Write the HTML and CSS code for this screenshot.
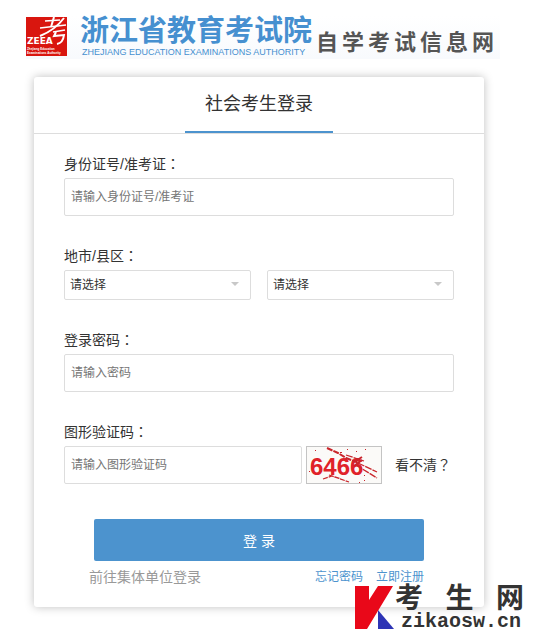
FILE: index.html
```html
<!DOCTYPE html>
<html lang="zh-CN">
<head>
    <meta charset="UTF-8">
    <meta name="viewport" content="width=device-width, initial-scale=1.0">
    <title>社会考生登录</title>
    <link rel="stylesheet" href="styles.css">
</head>
<body>
    <div class="page">
        <header class="header">
            <svg class="logo" viewBox="0 0 41 40" aria-hidden="true">
                <rect width="41" height="39" fill="#d9160f"/>
                <g fill="none" stroke="#fff">
                    <path d="M19 4 L34 3" stroke-width="1.6"/>
                    <path d="M28 0 L25 10" stroke-width="2"/>
                    <path d="M14 11 L40 8" stroke-width="1.6"/>
                    <path d="M38 1 Q29 13 14 19" stroke-width="2"/>
                    <path d="M27 15 L39 13" stroke-width="1.6"/>
                    <path d="M30 15 L28 19 L38 18 Q37 26 31 27" stroke-width="2"/>
                </g>
                <text class="logo-name" x="1" y="27">ZEEA</text>
                <text class="logo-sub" x="1" y="33">Zhejiang Education</text>
                <text class="logo-sub" x="1" y="37">Examinations Authority</text>
            </svg>
            <div class="org">
                <h1 class="org-name">浙江省教育考试院</h1>
                <p class="org-en">ZHEJIANG EDUCATION EXAMINATIONS AUTHORITY</p>
            </div>
            <p class="site-name"><span>自</span><span>学</span><span>考</span><span>试</span><span>信</span><span>息</span><span>网</span></p>
        </header>

        <main class="card">
            <div class="card-head">
                <h2 class="tab">社会考生登录</h2>
            </div>
            <form class="form">
                <div class="field">
                    <label for="idcard">身份证号/准考证<span class="punct" lang="zh-TW">：</span></label>
                    <input class="text" type="text" id="idcard" placeholder="请输入身份证号/准考证">
                </div>
                <div class="field">
                    <label for="city">地市/县区<span class="punct" lang="zh-TW">：</span></label>
                    <div class="selects">
                        <div class="select-box">
                            <select id="city"><option>请选择</option></select>
                        </div>
                        <div class="select-box">
                            <select id="county" aria-label="县区"><option>请选择</option></select>
                        </div>
                    </div>
                </div>
                <div class="field">
                    <label for="password">登录密码<span class="punct" lang="zh-TW">：</span></label>
                    <input class="text" type="password" id="password" placeholder="请输入密码">
                </div>
                <div class="field">
                    <label for="code">图形验证码<span class="punct" lang="zh-TW">：</span></label>
                    <div class="code-row">
                        <input class="text" type="text" id="code" placeholder="请输入图形验证码">
                        <svg class="captcha" viewBox="0 0 76 38">
                            <rect x="0.5" y="0.5" width="75" height="37" fill="#fbfaf8" stroke="#c4c4c4"/>
                            <text class="captcha-text" x="4" y="29">6466</text>
                            <g fill="none" stroke="#c9252b">
                                <path d="M21 2 L32 7 L40 12 L53 17" stroke-width="2" stroke-dasharray="6 1"/>
                                <path d="M40 9 L58 15 M52 17 L71 26 M50 19 L71 32" stroke-width="1.3" stroke-dasharray="7 1"/>
                                <path d="M17 33 L26 30 L43 36 M23 29 L35 33" stroke-width="1.3" stroke-dasharray="5 1"/>
                                <path d="M48 16 L56 11 M48 20 L56 14" stroke-width="2"/>
                            </g>
                            <path fill="#c9252b" d="M9 4h1v1h-1z M34 6h2v1h-2z M41 3h1v1h-1z M50 5h1v1h-1z M59 3h1v1h-1z M3 25h1v1h-1z M53 36h1v1h-1z M58 29h1v1h-1z M58 34h1v1h-1z M11 12h1v1h-1z"/>
                        </svg>
                        <a class="refresh" href="#">看不清<span class="punct" lang="zh-TW">？</span></a>
                    </div>
                </div>
                <div class="actions">
                    <button class="submit" type="submit">登 录</button>
                    <div class="links">
                        <a class="unit" href="#">前往集体单位登录</a>
                        <a href="#">忘记密码</a>
                        <a href="#">立即注册</a>
                    </div>
                </div>
            </form>
        </main>

        <div class="watermark">
            <svg class="mark" viewBox="0 0 39 44" aria-hidden="true">
                <path fill="#e90819" d="M0 1 H14 V15 L23 1 H38 L12 44 H0 Z"/>
                <path fill="#2d34b5" d="M23 25 L39 44 H23 Z"/>
            </svg>
            <div class="mark-text">
                <p class="mark-name"><span>考</span><span>生</span><span>网</span></p>
                <p class="mark-url">zikaosw.cn</p>
            </div>
        </div>
    </div>
</body>
</html>
```
FILE: styles.css
```css
* {
    box-sizing: border-box;
}

body {
    margin: 0;
    background-color: #fff;
    color: #333;
    font-family: "Liberation Sans", "Noto Sans CJK SC", sans-serif;
    font-size: 14px;
    line-height: 20px;
}

h1, h2, p {
    margin: 0;
}

a {
    color: #4c93ce;
    text-decoration: none;
}

.page {
    position: relative;
    min-height: 100vh;
    padding: 16px 53px 36px 34px;
}

/* logo bar */
.header {
    display: flex;
    width: max-content;
    height: 43px;
    margin: 0 0 18px -8px;
    background: linear-gradient(#fff, #f8fafd);
}

.logo {
    width: 41px;
    height: 40px;
    margin-top: 1px;
}

.logo-name {
    font: bold 9px "DejaVu Sans", sans-serif;
    fill: #fff;
}

.logo-sub {
    font: bold 3px "Liberation Sans", sans-serif;
    fill: #fff;
}

.org {
    margin-left: 13px;
    color: #4690d0;
}

.org-name {
    font-size: 29px;
    line-height: 30px;
}

.org-en {
    padding-left: 2px;
    font-size: 9px;
    line-height: 12px;
}

.site-name {
    display: flex;
    gap: 4px;
    margin-left: 4px;
    padding-right: 6px;
    color: #555;
    font-size: 22px;
    font-weight: bold;
    line-height: 53px;
}

/* login card */
.card {
    background-color: #fff;
    border-radius: 3px;
    box-shadow: 0 0 10px rgba(0, 0, 0, 0.25);
}

.card-head {
    display: flex;
    justify-content: center;
    height: 57px;
    border-bottom: 1px solid #ddd;
}

.tab {
    padding: 0 20px;
    border-bottom: 2px solid #4c93ce;
    font-size: 18px;
    font-weight: normal;
    line-height: 54px;
}

.form {
    display: flex;
    flex-direction: column;
    gap: 30px;
    padding: 20px 30px;
}

.field {
    display: flex;
    flex-direction: column;
    gap: 4px;
}

/* centred full-width punctuation */
.punct {
    font-family: "Noto Sans CJK TC", sans-serif;
    line-height: 1;
}

.text,
select {
    width: 100%;
    border: 1px solid #ddd;
    border-radius: 2px;
    background-color: #fff;
    color: #333;
    font-family: inherit;
    font-size: 12px;
}

.text {
    height: 38px;
    padding: 0 6px;
}

.text::placeholder {
    color: #757575;
}

.selects {
    display: grid;
    grid-template-columns: 1fr 1fr;
    gap: 16px;
}

.select-box {
    position: relative;
    display: flex;
}

.select-box::after {
    content: "";
    position: absolute;
    top: 12px;
    right: 12px;
    border: 4px solid transparent;
    border-top-color: #c8c8c8;
    pointer-events: none;
}

select {
    height: 30px;
    padding: 0 5px;
    appearance: none;
}

.code-row {
    display: flex;
    align-items: center;
}

.code-row .text {
    flex: 1;
    min-width: 0;
}

.captcha {
    width: 76px;
    height: 38px;
    margin: 0 13px 0 4px;
}

.captcha-text {
    font: bold 24px "Liberation Sans", sans-serif;
    fill: #e02229;
}

.refresh {
    width: 59px;
    color: #333;
}

.actions {
    padding: 5px 30px 0;
}

.submit {
    width: 100%;
    height: 42px;
    border: none;
    border-radius: 2px;
    background-color: #4c93ce;
    color: #fff;
    font-family: inherit;
    font-size: 14px;
    cursor: pointer;
}

.links {
    display: flex;
    gap: 13px;
    margin: 6px 0 0 -5px;
    font-size: 12px;
}

.unit {
    margin-right: auto;
    color: #999;
    font-size: 14px;
}

/* site mark over the page corner */
.watermark {
    position: absolute;
    right: 13px;
    bottom: 12px;
    display: flex;
}

.mark {
    width: 39px;
    height: 44px;
}

.mark-text {
    width: 130px;
    padding-left: 1px;
    color: #333;
}

.mark-name {
    display: flex;
    justify-content: space-between;
    font-size: 28px;
    font-weight: bold;
    line-height: 28px;
}

.mark-url {
    padding-left: 6px;
    font: bold 20px/18px "Liberation Mono", monospace;
}
```
